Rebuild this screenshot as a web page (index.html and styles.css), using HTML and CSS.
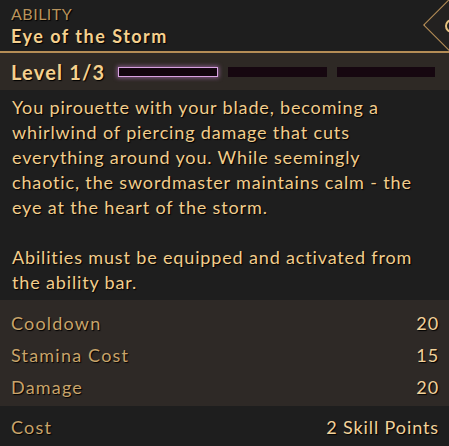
FILE: index.html
```html
<!DOCTYPE html>
<html>
<head>
<meta charset="utf-8">
<link rel="stylesheet" href="styles.css">
</head>
<body>
<div class="card">
  <div class="header">
    <div class="kind">ABILITY</div>
    <div class="title">Eye of the Storm</div>
    <div class="badge"><span class="ring"></span></div>
  </div>
  <div class="level">
    <span class="level-label">Level 1/3</span>
    <div class="bars">
      <span class="bar active"></span>
      <span class="bar"></span>
      <span class="bar"></span>
    </div>
  </div>
  <div class="desc">
    <p>You pirouette with your blade, becoming a<br>whirlwind of piercing damage that cuts<br>everything around you. While seemingly<br>chaotic, the swordmaster maintains calm - the<br>eye at the heart of the storm.</p>
    <p>Abilities must be equipped and activated from<br>the ability bar.</p>
  </div>
  <div class="stats">
    <div class="row"><span class="label">Cooldown</span><span class="value">20</span></div>
    <div class="row"><span class="label">Stamina Cost</span><span class="value">15</span></div>
    <div class="row"><span class="label">Damage</span><span class="value">20</span></div>
  </div>
  <div class="cost">
    <span class="label">Cost</span><span class="value">2 Skill Points</span>
  </div>
</div>
</body>
</html>
```
FILE: styles.css
```css
* { box-sizing: border-box; }
html, body { margin: 0; padding: 0; background: #1e1e1e; }
body { font-family: "Lato", "Open Sans", sans-serif; }
.card {
  width: 449px;
  height: 446px;
  overflow: hidden;
  display: flex;
  flex-direction: column;
  text-shadow: 1px 1px 1px #000;
}
.header {
  position: relative;
  height: 53px;
  padding: 4px 11px 0;
  background: #1e1e1e;
  border-bottom: 2px solid #b58d56;
}
.kind {
  font-size: 16px;
  line-height: 19px;
  letter-spacing: 0.5px;
  color: #b8935c;
}
.title {
  font-size: 18px;
  font-weight: 700;
  line-height: 24px;
  margin-top: 1px;
  letter-spacing: 1.5px;
  color: #f5d08e;
}
.badge {
  position: absolute;
  left: 423px;
  top: -13px;
  width: 76px;
  height: 76px;
  clip-path: polygon(0 50%, 50% 0, 100% 50%, 50% 100%);
  background: #b58d56;
}
.badge::before {
  content: "";
  position: absolute;
  inset: 1.5px;
  clip-path: polygon(0 50%, 50% 0, 100% 50%, 50% 100%);
  background: #232120;
}
.ring {
  position: absolute;
  left: 22px;
  top: 32px;
  width: 14px;
  height: 14px;
  border: 2px solid #e7c27e;
  border-radius: 50%;
}
.level {
  height: 37px;
  background: #2e2925;
  display: flex;
  align-items: center;
  padding: 0 11px;
}
.level-label {
  font-size: 20px;
  font-weight: 700;
  letter-spacing: 1.2px;
  color: #f5d08e;
  width: 107px;
  white-space: nowrap;
}
.bars {
  display: flex;
  gap: 10px;
  flex: 1;
  padding-right: 3px;
}
.bar {
  flex: 1;
  height: 10px;
  background: #160710;
}
.bar.active {
  border: 1px solid #d9a2e2;
  box-shadow: 0 0 4px 1px rgba(200, 130, 215, 0.55);
  background: #12050e;
}
.desc {
  background: #1e1e1e;
  padding: 5px 4px 0 12px;
  height: 210px;
  color: #f2cd8c;
  font-size: 18px;
  line-height: 25px;
  letter-spacing: 0.85px;
  white-space: nowrap;
}
.desc p { margin: 0 0 25px; }
.stats {
  background: #2e2926;
  padding: 7px 11px 0;
  height: 106px;
}
.row, .cost {
  display: flex;
  justify-content: space-between;
  align-items: center;
}
.row { height: 32px; }
.label { color: #c9a46a; font-size: 18px; letter-spacing: 1.2px; }
.value { color: #f2d19a; font-size: 18px; letter-spacing: 0.9px; margin-right: -1px; }
.cost {
  flex: 1;
  background: #1e1e1e;
  padding: 2px 11px 0;
}
```
